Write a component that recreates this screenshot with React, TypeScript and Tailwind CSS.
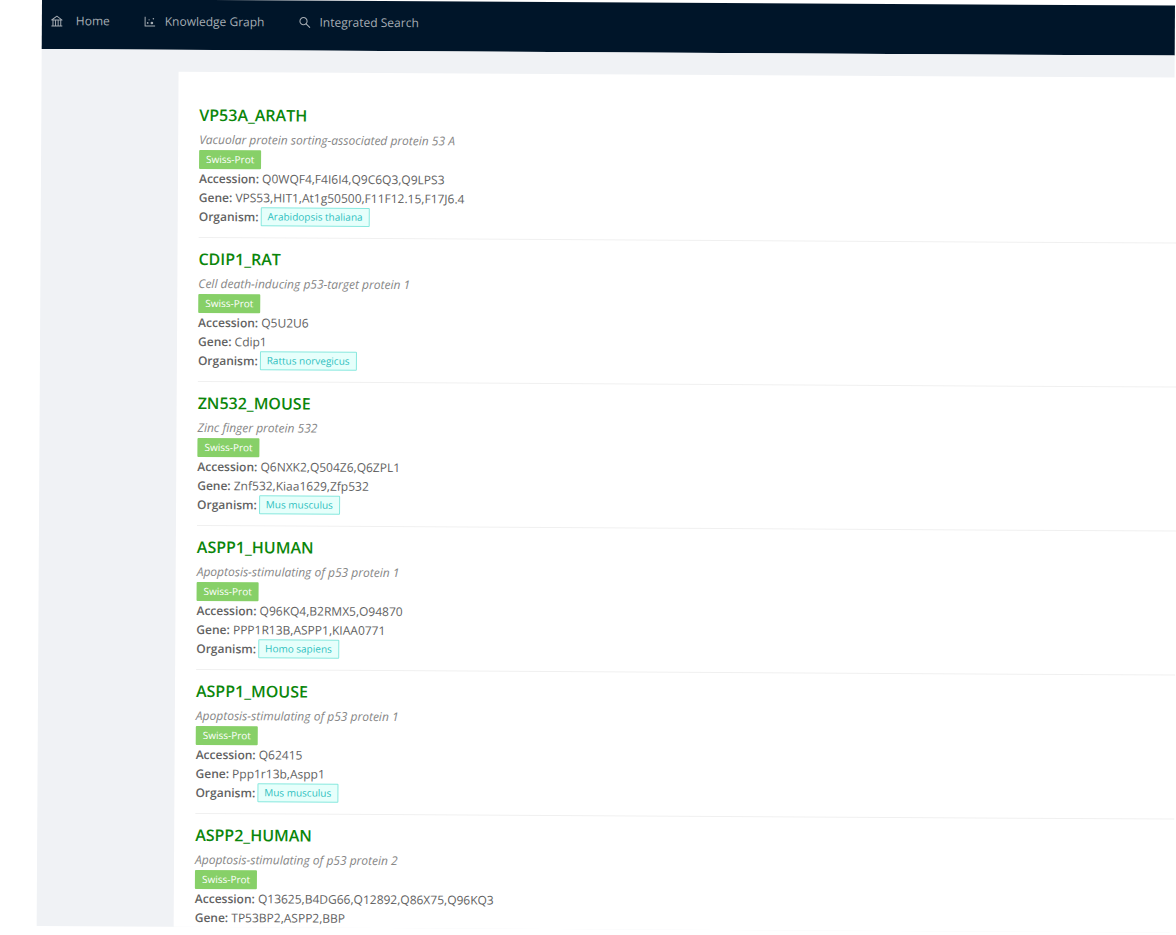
import { AiOutlineBank, AiOutlineDotChart, AiOutlineSearch } from 'react-icons/ai';

type Protein = {
  name: string;
  description: string;
  accession: string;
  gene: string;
  organism?: string;
};

const proteins: Protein[] = [
  { name: 'VP53A_ARATH', description: 'Vacuolar protein sorting-associated protein 53 A', accession: 'Q0WQF4,F4I6I4,Q9C6Q3,Q9LPS3', gene: 'VPS53,HIT1,At1g50500,F11F12.15,F17J6.4', organism: 'Arabidopsis thaliana' },
  { name: 'CDIP1_RAT', description: 'Cell death-inducing p53-target protein 1', accession: 'Q5U2U6', gene: 'Cdip1', organism: 'Rattus norvegicus' },
  { name: 'ZN532_MOUSE', description: 'Zinc finger protein 532', accession: 'Q6NXK2,Q504Z6,Q6ZPL1', gene: 'Znf532,Kiaa1629,Zfp532', organism: 'Mus musculus' },
  { name: 'ASPP1_HUMAN', description: 'Apoptosis-stimulating of p53 protein 1', accession: 'Q96KQ4,B2RMX5,O94870', gene: 'PPP1R13B,ASPP1,KIAA0771', organism: 'Homo sapiens' },
  { name: 'ASPP1_MOUSE', description: 'Apoptosis-stimulating of p53 protein 1', accession: 'Q62415', gene: 'Ppp1r13b,Aspp1', organism: 'Mus musculus' },
  { name: 'ASPP2_HUMAN', description: 'Apoptosis-stimulating of p53 protein 2', accession: 'Q13625,B4DG66,Q12892,Q86X75,Q96KQ3', gene: 'TP53BP2,ASPP2,BBP' },
];

const links = [
  { icon: <AiOutlineBank size={14} />, label: 'Home', gap: 'gap-3' },
  { icon: <AiOutlineDotChart size={14} />, label: 'Knowledge Graph', gap: 'gap-2' },
  { icon: <AiOutlineSearch size={14} />, label: 'Integrated Search', gap: 'gap-2' },
];

function ProteinItem({ protein }: { protein: Protein }) {
  return (
    <li className="border-b border-[#f0f0f0] pt-2 pb-[11px] last:border-b-0 last:pb-0">
      <h2 className="text-base leading-[26px] font-semibold">
        <a href="#" className="text-[#0b860b]">{protein.name}</a>
      </h2>
      <p className="mt-0.5 leading-5 text-[#868686] italic">{protein.description}</p>
      <div className="flex">
        <span className="rounded-[1px] bg-[#87d068] px-[7px] text-[10px] leading-[19px] text-white">Swiss-Prot</span>
      </div>
      <p className="leading-[19px]">
        <strong className="font-semibold">Accession:</strong> {protein.accession}
      </p>
      <p className="leading-[19px]">
        <strong className="font-semibold">Gene:</strong> {protein.gene}
      </p>
      {protein.organism && (
        <div className="flex items-center gap-0.5 leading-[19px]">
          <strong className="font-semibold">Organism:</strong>
          <span className="rounded-[1px] border border-[#87e8de] bg-[#e6fffb] px-1.5 text-[10px] leading-[17px] text-[#2fbfbf]">
            {protein.organism}
          </span>
        </div>
      )}
    </li>
  );
}

export default function App() {
  return (
    <div className="min-h-screen overflow-hidden bg-white font-['Open_Sans','Noto_Sans',sans-serif] text-xs text-[#626262]">
      <div className="mr-px ml-[42px] origin-[15%_0] rotate-[0.33deg]">
        <header className="h-[50px] bg-[#001529]">
          <nav className="flex h-11 items-center gap-[33px] pl-2 text-[#a6adb4]">
            {links.map((link) => (
              <a key={link.label} href="#" className={`flex items-center ${link.gap}`}>
                {link.icon}
                {link.label}
              </a>
            ))}
          </nav>
        </header>
        <main className="bg-[#f0f2f5] pt-[22px] pl-[137px]">
          <ul className="-mr-1 bg-white pt-[22px] pl-[21px]">
            {proteins.map((protein) => (
              <ProteinItem key={protein.name} protein={protein} />
            ))}
          </ul>
        </main>
      </div>
    </div>
  );
}
